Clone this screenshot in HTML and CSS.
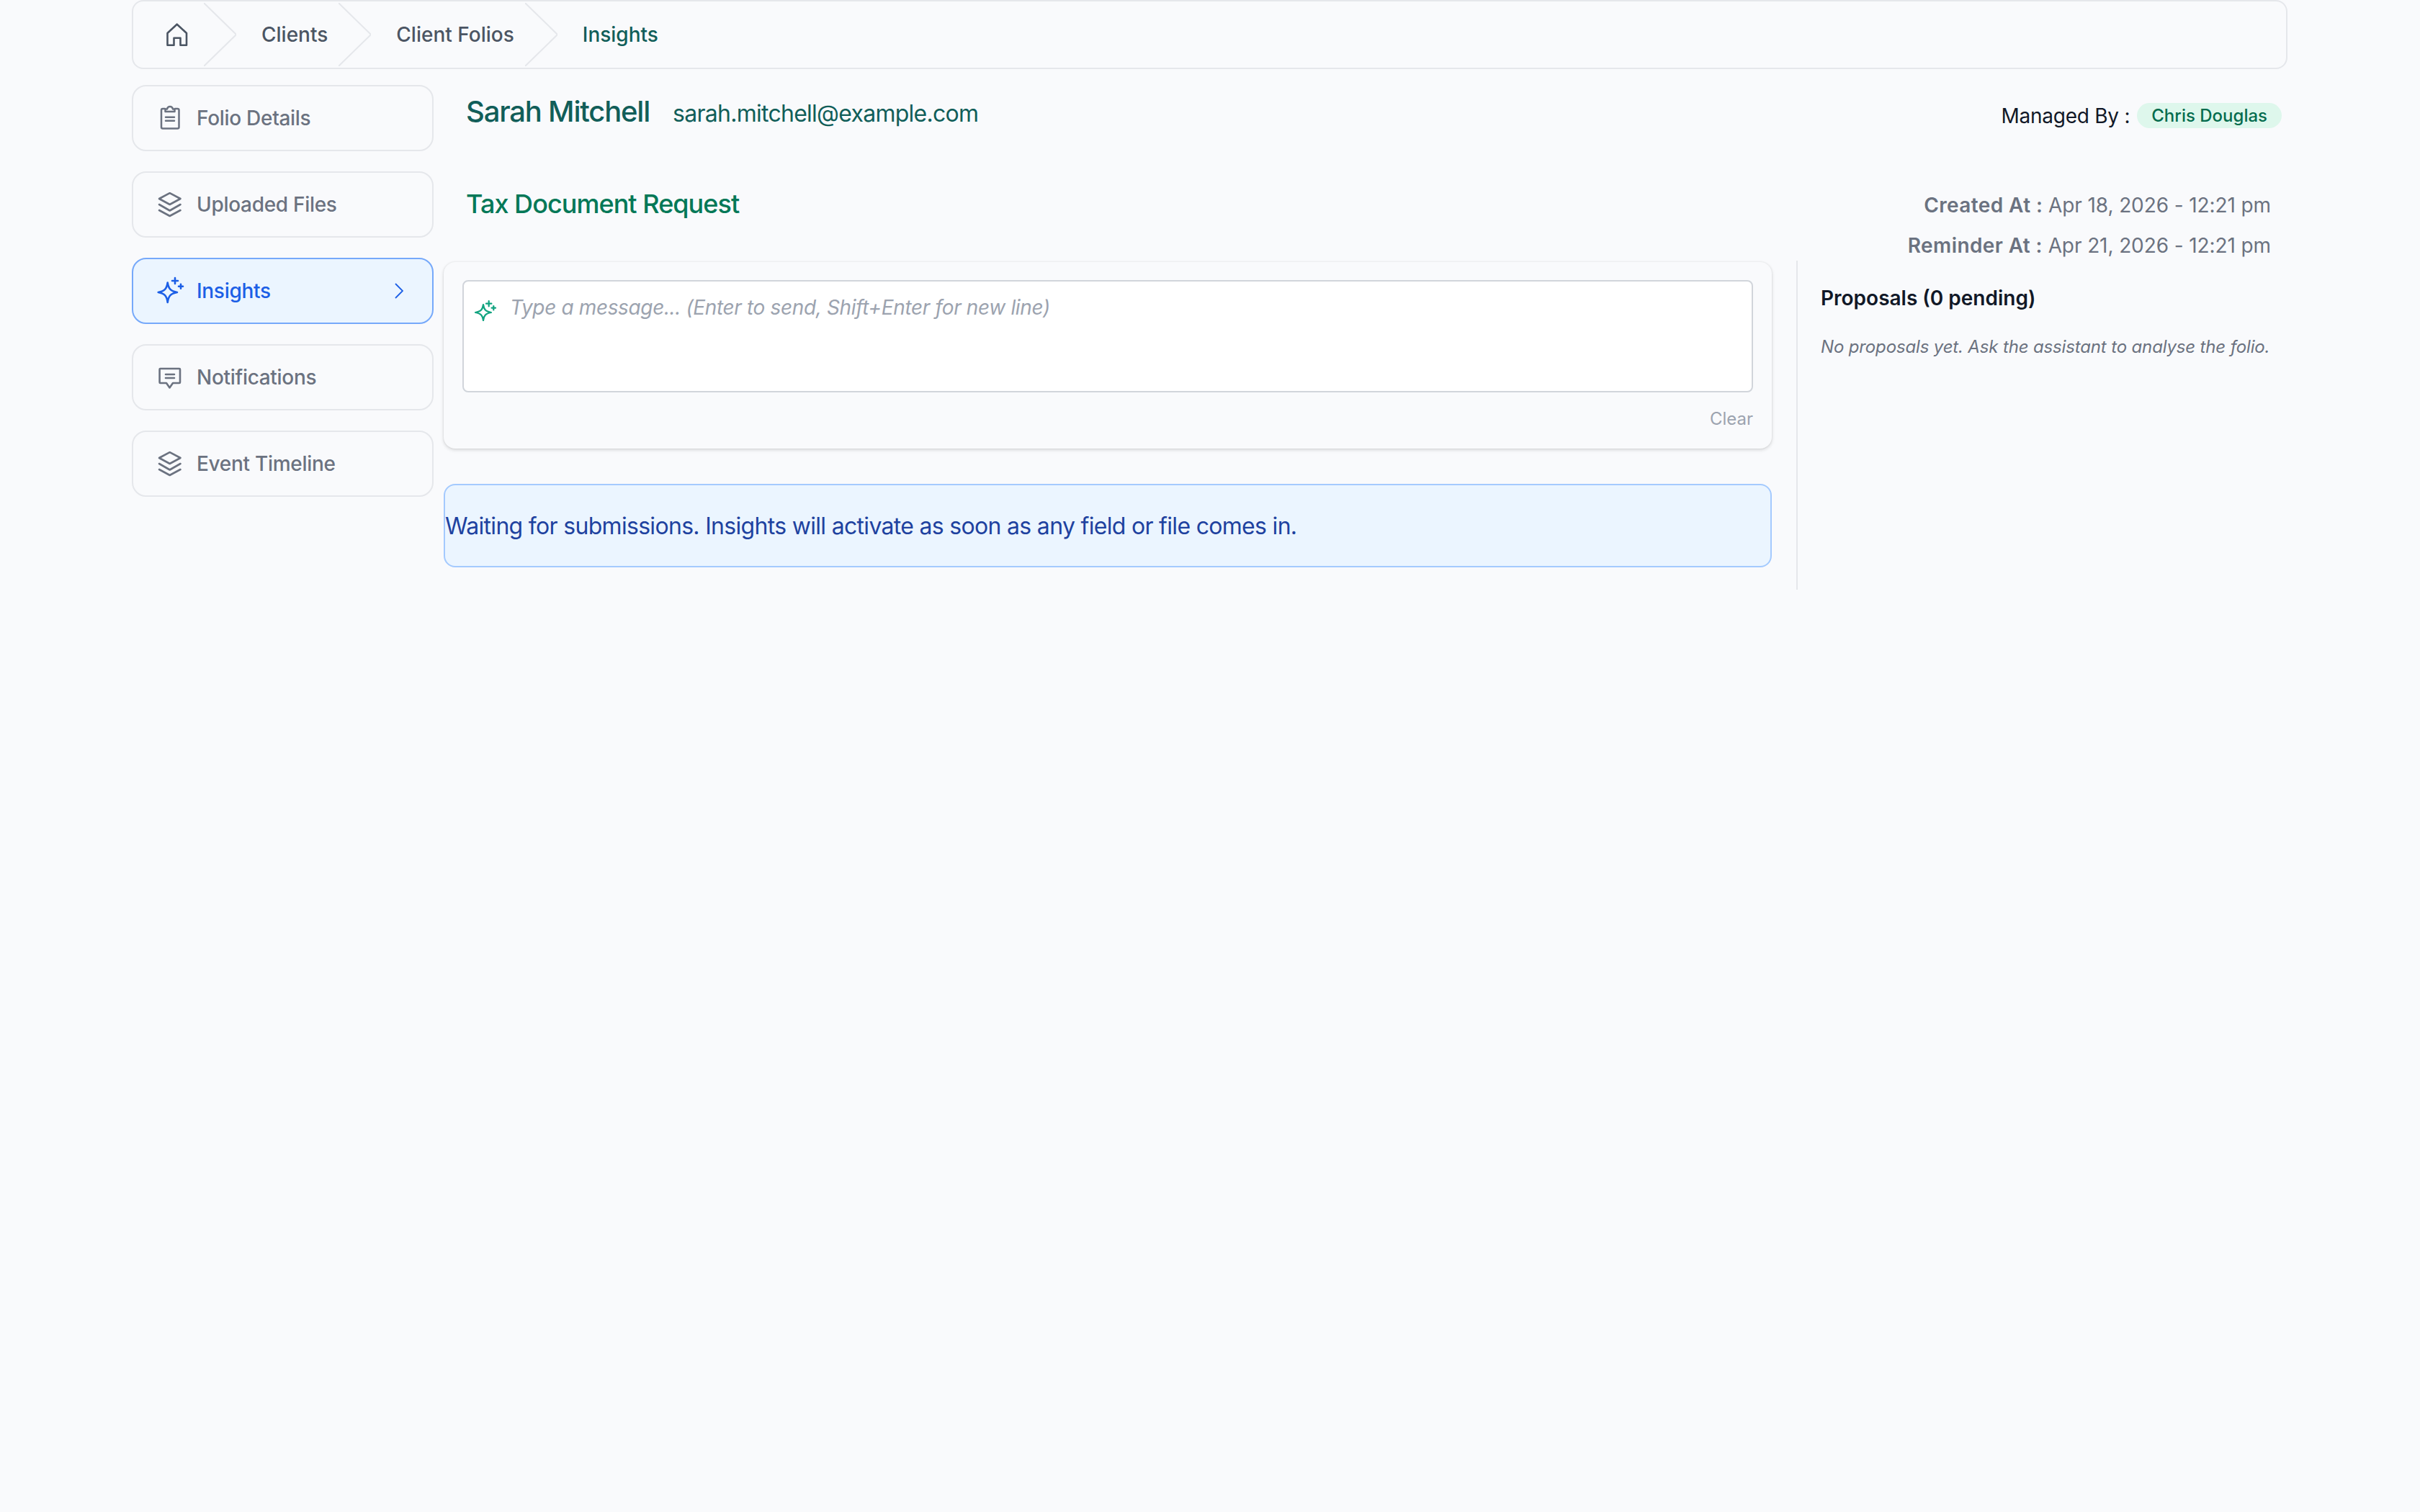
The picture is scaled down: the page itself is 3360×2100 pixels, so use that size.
FILE: index.html
```html
<!DOCTYPE html>
<html lang="en">
<head>
<meta charset="UTF-8" />
<title>Insights</title>
<link rel="stylesheet" href="styles.css">
</head>
<body>
<div class="page">
  <nav class="breadcrumb">
    <svg class="home-icon" viewBox="0 0 30 32" fill="none"><path d="M1.5 30.7V14L14.7 1.7L28 14V30.7H19.5V20.7H10.5V30.7Z" stroke="#4b5563" stroke-width="2.6" stroke-linejoin="round"/></svg>
    <svg class="crumb-sep" viewBox="0 0 45 88" fill="none"><path d="M0 0L45 44L0 88" stroke="#e5e7eb" stroke-width="2"/></svg>
    <a class="crumb">Clients</a>
    <svg class="crumb-sep" viewBox="0 0 45 88" fill="none"><path d="M0 0L45 44L0 88" stroke="#e5e7eb" stroke-width="2"/></svg>
    <a class="crumb">Client Folios</a>
    <svg class="crumb-sep" viewBox="0 0 45 88" fill="none"><path d="M0 0L45 44L0 88" stroke="#e5e7eb" stroke-width="2"/></svg>
    <a class="crumb current">Insights</a>
  </nav>

  <div class="layout">
    <aside class="sidebar">
      <a class="tile">
        <svg class="tile-icon" viewBox="0 0 36 36" fill="none" stroke="currentColor" stroke-width="2.5" stroke-linejoin="round" stroke-linecap="round"><path d="M11 5H8Q6 5 6 7V30.5Q6 32.5 8 32.5H28.5Q30.5 32.5 30.5 30.5V7Q30.5 5 28.5 5H25"/><path d="M11.5 9V5.5H14C14.5 3 16 2 18 2S21.5 3 22 5.5H24.5V9Z"/><path d="M12 16.7H24M12 21.7H24"/></svg>
        <span>Folio Details</span>
      </a>
      <a class="tile">
        <svg class="tile-icon" viewBox="0 0 36 36" fill="none" stroke="currentColor" stroke-width="2.6" stroke-linejoin="round" stroke-linecap="round"><path d="M17.7 2.2L32.5 10L17.7 18L3 10Z"/><path d="M3 18L17.7 26.5L32.5 18"/><path d="M3 26L17.7 34L32.5 26"/></svg>
        <span>Uploaded Files</span>
      </a>
      <a class="tile active">
        <svg class="tile-icon" viewBox="0 0 36 36" fill="none" stroke="currentColor" stroke-width="2.6" stroke-linejoin="round" stroke-linecap="round"><path d="M14.7 6.5C16 15 19 18.5 28 20C19 21.5 16 25 14.7 34C13.5 25 10.5 21.5 1.7 20C10.5 18.5 13.5 15 14.7 6.5Z"/><path d="M25 0V8M21 4H29M33 8.7V14.7M30 11.7H36"/></svg>
        <span>Insights</span>
        <svg class="tile-arrow" viewBox="0 0 12 22" fill="none"><path d="M1 1L11 11L1 21" stroke="currentColor" stroke-width="1.8"/></svg>
      </a>
      <a class="tile">
        <svg class="tile-icon" viewBox="0 0 36 36" fill="none" stroke="currentColor" stroke-width="2.6" stroke-linejoin="round" stroke-linecap="round"><path d="M4.5 6H31Q32 6 32 7V25Q32 26 31 26H22L17.5 32.5L13 26H4.5Q3.6 26 3.6 25V7Q3.6 6 4.5 6Z"/><path d="M12 14H24M12 19H24"/></svg>
        <span>Notifications</span>
      </a>
      <a class="tile">
        <svg class="tile-icon" viewBox="0 0 36 36" fill="none" stroke="currentColor" stroke-width="2.6" stroke-linejoin="round" stroke-linecap="round"><path d="M17.7 2.2L32.5 10L17.7 18L3 10Z"/><path d="M3 18L17.7 26.5L32.5 18"/><path d="M3 26L17.7 34L32.5 26"/></svg>
        <span>Event Timeline</span>
      </a>
    </aside>

    <main class="content">
      <div class="client-row">
        <div class="client">
          <h2>Sarah Mitchell</h2>
          <span class="client-email">sarah.mitchell@example.com</span>
        </div>
        <div class="managed">
          <span>Managed By :</span>
          <span class="pill">Chris Douglas</span>
        </div>
      </div>

      <div class="request-row">
        <h3>Tax Document Request</h3>
        <div class="dates">
          <p><b>Created At :</b> Apr 18, 2026 - 12:21 pm</p>
          <p><b>Reminder At :</b> Apr 21, 2026 - 12:21 pm</p>
        </div>
      </div>

      <div class="panels">
        <section class="chat">
          <div class="chat-card">
            <div class="chat-input">
              <svg class="chat-spark" viewBox="0 0 30 30" fill="none" stroke="#10a37f" stroke-width="2.2" stroke-linejoin="round" stroke-linecap="round"><path d="M12 5C13 12 15 14.5 23 16C15 17.5 13 20 12 27C11 20 9 17.5 1 16C9 14.5 11 12 12 5Z"/><path d="M19.7 0V7.4M16 3.7H23.4M26.3 7V12.4M23.6 9.7H29"/></svg>
              <textarea placeholder="Type a message... (Enter to send, Shift+Enter for new line)"></textarea>
            </div>
            <div class="chat-actions">Clear</div>
          </div>
          <div class="notice">Waiting for submissions. Insights will activate as soon as any field or file comes in.</div>
        </section>

        <section class="proposals">
          <h4>Proposals (0 pending)</h4>
          <p>No proposals yet. Ask the assistant to analyse the folio.</p>
        </section>
      </div>
    </main>
  </div>
</div>
</body>
</html>
```

FILE: styles.css
```css
html, body {
  margin: 0;
  padding: 0;
}

body {
  min-height: 2100px;
  background: #f9fafc;
  font-family: 'Inter', 'Noto Sans', sans-serif;
  font-size: 28px;
  color: #111827;
}

.page {
  width: 2993px;
  margin-left: 183px;
}

/* Breadcrumb */
.breadcrumb {
  display: flex;
  align-items: center;
  box-sizing: border-box;
  height: 96px;
  border: 2px solid #e5e7eb;
  border-radius: 16px;
  padding-left: 46px;
}

.home-icon {
  width: 30px;
  height: 32px;
  flex: none;
  margin-right: 22px;
}

.crumb-sep {
  width: 45px;
  height: 88px;
  flex: none;
  margin-right: 35px;
}

.crumb {
  color: #4b5563;
  font-weight: 500;
  margin-right: 15px;
}

.crumb.current {
  color: #115e59;
}

.layout {
  display: flex;
  margin-top: 22px;
}

/* Sidebar */
.sidebar {
  width: 419px;
  flex: none;
  display: flex;
  flex-direction: column;
  gap: 28px;
}

.tile {
  display: flex;
  align-items: center;
  box-sizing: border-box;
  height: 92px;
  padding: 0 40px 0 33px;
  border: 2px solid #e5e7eb;
  border-radius: 20px;
  color: #6b7280;
  font-weight: 500;
  letter-spacing: -0.3px;
}

.tile.active {
  background: #ebf5ff;
  border-color: #76a9fa;
  color: #1c5fe6;
}

.tile-icon {
  width: 36px;
  height: 36px;
  flex: none;
  margin-right: 19px;
  overflow: visible;
}

.tile-arrow {
  width: 12px;
  height: 22px;
  margin-left: auto;
}

/* Main content */
.content {
  flex: 1;
  margin-left: 14px;
}

.client-row {
  display: flex;
  justify-content: space-between;
  align-items: flex-start;
  padding: 12px 8px 0 31px;
}

.client {
  display: flex;
  align-items: baseline;
  gap: 32px;
}

.client h2 {
  margin: 0;
  font-size: 40px;
  font-weight: 500;
  letter-spacing: -1.2px;
  color: #115e59;
}

.client-email {
  font-size: 32px;
  letter-spacing: -0.74px;
  color: #115e59;
}

.managed {
  display: flex;
  align-items: center;
  gap: 10px;
  margin-top: 13px;
}

.managed span:first-child {
  letter-spacing: -0.25px;
}

.pill {
  padding: 3px 20px;
  border-radius: 18px;
  background: #def7ec;
  color: #046c4e;
  font-size: 24px;
  font-weight: 500;
}

.request-row {
  display: flex;
  justify-content: space-between;
  align-items: flex-start;
  height: 101px;
  margin-top: 82px;
  padding: 0 23px 0 31px;
}

.request-row h3 {
  margin: 0;
  font-size: 36px;
  font-weight: 500;
  letter-spacing: -0.96px;
  color: #047857;
}

.dates {
  margin-top: 7px;
  text-align: right;
  color: #6b7280;
  letter-spacing: -0.1px;
}

.dates p {
  margin: 0 0 22px;
  line-height: 34px;
}

.dates b {
  font-weight: 600;
  letter-spacing: 0.4px;
}

.panels {
  display: flex;
}

.chat {
  width: 1844px;
  flex: none;
  padding: 2px 0 31px;
}

.chat-card {
  box-sizing: border-box;
  height: 259px;
  padding: 25px 26px 0;
  border-radius: 16px;
  background: #f9fafc;
  box-shadow: 0 2px 5px rgba(0, 0, 0, 0.14), 0 0 3px rgba(0, 0, 0, 0.08);
}

.chat-input {
  position: relative;
  height: 156px;
}

.chat-spark {
  position: absolute;
  left: 17px;
  top: 29px;
  width: 30px;
  height: 30px;
  overflow: visible;
}

.chat-input textarea {
  display: block;
  box-sizing: border-box;
  width: 100%;
  height: 100%;
  padding: 19px 64px;
  border: 2px solid #d1d5db;
  border-radius: 8px;
  background: #fff;
  resize: none;
  font-family: 'Inter', 'Noto Sans', sans-serif;
  font-size: 28px;
  letter-spacing: -0.36px;
}

.chat-input textarea::placeholder {
  color: #9ca3af;
  font-style: italic;
}

.chat-actions {
  margin-top: 22px;
  text-align: right;
  color: #9ca3af;
  font-size: 24px;
}

.notice {
  display: flex;
  align-items: center;
  box-sizing: border-box;
  height: 116px;
  margin-top: 49px;
  border: 2px solid #a4cafe;
  border-radius: 16px;
  background: #ebf5ff;
  color: #1e429f;
  font-size: 32px;
  letter-spacing: -0.69px;
}

.proposals {
  flex: 1;
  margin-left: 34px;
  padding: 35px 0 0 32px;
  border-left: 2px solid #e5e7eb;
}

.proposals h4 {
  margin: 0;
  font-size: 28px;
  font-weight: 600;
}

.proposals p {
  margin: 36px 0 0;
  color: #6b7280;
  font-size: 24px;
  font-style: italic;
  letter-spacing: -0.15px;
}
```
